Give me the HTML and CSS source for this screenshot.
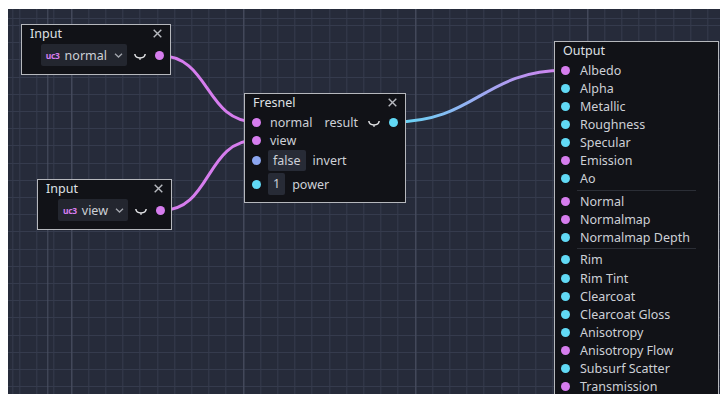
FILE: index.html
```html
<!DOCTYPE html>
<html lang="en">
    <head>
        <meta charset="utf-8">
        <title>Visual Shader</title>
        <link rel="stylesheet" href="styles.css">
    </head>
    <body>
        <div class="graph">
            <!-- connections between ports, in graph coordinates -->
            <svg class="wires" width="712" height="385">
                <defs>
                    <linearGradient id="scalar-to-vec" gradientUnits="userSpaceOnUse" x1="385" y1="0" x2="558" y2="0">
                        <stop offset="0" stop-color="#61d9f5"/>
                        <stop offset="1" stop-color="#d67dee"/>
                    </linearGradient>
                </defs>
                <path class="wire-vec" d="M151 46.5 C203 46.5 196 113 248.5 113"/>
                <path class="wire-vec" d="M152.7 201.7 C204 201.7 197 131 248.5 131"/>
                <path d="M385.3 113 C468 113 475 61.3 557.7 61.3" stroke="url(#scalar-to-vec)"/>
            </svg>

            <div class="node input-normal">
                <div class="node-title">
                    <span>Input</span>
                    <svg class="close" width="9" height="9"><path d="M0.7 0.7 L8.3 8.3 M8.3 0.7 L0.7 8.3"/></svg>
                </div>
                <div class="out-row">
                    <div class="dropdown">
                        <span class="type-icon">uc3</span>
                        <span class="dropdown-text">normal</span>
                        <svg class="chevron" width="9" height="5"><path d="M1 0.8 L4.5 4 L8 0.8"/></svg>
                    </div>
                    <svg class="eye" width="12" height="7"><path d="M0.8 1 C1.5 6.2 10.5 6.2 11.2 1 M6 5 V6.8"/></svg>
                    <span class="port vec"></span>
                </div>
            </div>

            <div class="node input-view">
                <div class="node-title">
                    <span>Input</span>
                    <svg class="close" width="9" height="9"><path d="M0.7 0.7 L8.3 8.3 M8.3 0.7 L0.7 8.3"/></svg>
                </div>
                <div class="out-row">
                    <div class="dropdown">
                        <span class="type-icon">uc3</span>
                        <span class="dropdown-text">view</span>
                        <svg class="chevron" width="9" height="5"><path d="M1 0.8 L4.5 4 L8 0.8"/></svg>
                    </div>
                    <svg class="eye" width="12" height="7"><path d="M0.8 1 C1.5 6.2 10.5 6.2 11.2 1 M6 5 V6.8"/></svg>
                    <span class="port vec"></span>
                </div>
            </div>

            <div class="node fresnel">
                <div class="node-title">
                    <span>Fresnel</span>
                    <svg class="close" width="9" height="9"><path d="M0.7 0.7 L8.3 8.3 M8.3 0.7 L0.7 8.3"/></svg>
                </div>
                <div class="row">
                    <span class="port vec"></span>
                    <span class="label">normal</span>
                    <span class="label result">result</span>
                    <svg class="eye" width="12" height="7"><path d="M0.8 1 C1.5 6.2 10.5 6.2 11.2 1 M6 5 V6.8"/></svg>
                    <span class="port scalar out-port"></span>
                </div>
                <div class="row">
                    <span class="port vec"></span>
                    <span class="label">view</span>
                </div>
                <div class="row row-field">
                    <span class="port bool"></span>
                    <span class="field">false</span>
                    <span class="field-label">invert</span>
                </div>
                <div class="row row-field row-spin">
                    <span class="port scalar"></span>
                    <span class="field">1</span>
                    <span class="field-label">power</span>
                </div>
            </div>

            <div class="node output">
                <div class="node-title">
                    <span>Output</span>
                </div>
                <div class="row"><span class="port vec"></span><span class="label">Albedo</span></div>
                <div class="row"><span class="port scalar"></span><span class="label">Alpha</span></div>
                <div class="row"><span class="port scalar"></span><span class="label">Metallic</span></div>
                <div class="row"><span class="port scalar"></span><span class="label">Roughness</span></div>
                <div class="row"><span class="port scalar"></span><span class="label">Specular</span></div>
                <div class="row"><span class="port vec"></span><span class="label">Emission</span></div>
                <div class="row"><span class="port scalar"></span><span class="label">Ao</span></div>
                <div class="sep"></div>
                <div class="row"><span class="port vec"></span><span class="label">Normal</span></div>
                <div class="row"><span class="port vec"></span><span class="label">Normalmap</span></div>
                <div class="row"><span class="port scalar"></span><span class="label">Normalmap Depth</span></div>
                <div class="sep"></div>
                <div class="row"><span class="port scalar"></span><span class="label">Rim</span></div>
                <div class="row"><span class="port scalar"></span><span class="label">Rim Tint</span></div>
                <div class="row"><span class="port scalar"></span><span class="label">Clearcoat</span></div>
                <div class="row"><span class="port scalar"></span><span class="label">Clearcoat Gloss</span></div>
                <div class="row"><span class="port scalar"></span><span class="label">Anisotropy</span></div>
                <div class="row"><span class="port vec"></span><span class="label">Anisotropy Flow</span></div>
                <div class="row"><span class="port scalar"></span><span class="label">Subsurf Scatter</span></div>
                <div class="row"><span class="port vec"></span><span class="label">Transmission</span></div>
            </div>
        </div>
    </body>
</html>
```

FILE: styles.css
```css
body {
    margin: 9px 0 0 8px;
    background-color: #fff;
    font-family: "Noto Sans", "Open Sans", sans-serif;
    font-size: 12.5px;
    color: #cdd0d6;
    overflow: hidden;
}

/* graph canvas with minor / major grid */
.graph {
    position: relative;
    width: 712px;
    height: 385px;
    overflow: hidden;
    background-color: #262b3a;
    background-image:
        repeating-linear-gradient(to right, #4a5062 0 1px, transparent 1px 172px),
        repeating-linear-gradient(to right, #353b4d 0 1px, transparent 1px 17.2px),
        repeating-linear-gradient(to bottom, #353b4d 0 1px, transparent 1px 17.2px);
    background-position: 63.3px 0, 11.3px 0, 0 16px;
}

.wires {
    position: absolute;
    left: 0;
    top: 0;
}

.wires path {
    fill: none;
    stroke-width: 3;
    stroke-linecap: round;
}

.wires .wire-vec {
    stroke: #d67dee;
}

.node {
    position: absolute;
    box-sizing: border-box;
    background-color: #111217;
    border: 1px solid #b6b8bd;
}

.node-title {
    display: flex;
    justify-content: space-between;
    align-items: flex-start;
    height: 19px;
    line-height: 17px;
    padding: 0 8px 0 8px;
    color: #dfe0e4;
}

.close {
    margin-top: 4px;
}

.close path {
    stroke: #b8bac0;
    stroke-width: 1.4;
}

.input-normal {
    left: 13px;
    top: 15px;
    width: 150px;
    height: 51px;
}

.input-view {
    left: 29px;
    top: 170px;
    width: 135px;
    height: 51px;
}

.fresnel {
    left: 236px;
    top: 84px;
    width: 162px;
    height: 110px;
}

.output {
    left: 546px;
    top: 32px;
    width: 165px;
}

.output .node-title {
    height: 19.3px;
}

.out-row {
    display: flex;
    align-items: center;
    justify-content: flex-end;
    height: 22px;
    padding-right: 6px;
}

.dropdown {
    display: flex;
    align-items: center;
    height: 22px;
    padding: 0 4px 0 5px;
    background-color: #23262f;
    border-radius: 2px;
}

.type-icon {
    font-size: 8.5px;
    font-weight: bold;
    letter-spacing: -0.3px;
    color: #d67dee;
}

.dropdown-text {
    margin-left: 5px;
}

.chevron {
    margin-left: 7px;
}

.chevron path {
    fill: none;
    stroke: #a3a6ad;
    stroke-width: 1.3;
}

.eye {
    margin: 3px 9px 0 7px;
}

.eye path {
    fill: none;
    stroke: #e2e3e6;
    stroke-width: 1.5;
}

.port {
    flex: none;
    width: 9px;
    height: 9px;
    border-radius: 50%;
}

.port.vec {
    background-color: #d67dee;
}

.port.scalar {
    background-color: #61d9f5;
}

.port.bool {
    background-color: #8ca6f0;
}

.row {
    display: flex;
    align-items: center;
    height: 18px;
    padding: 0 7px 0 7px;
}

.output .row {
    height: 18.06px;
    padding-left: 6px;
}

.label {
    margin-left: 9px;
    white-space: nowrap;
}

.output .label {
    margin-left: 10px;
}

.label.result {
    margin-left: auto;
}

.fresnel .eye {
    margin: 3px 9px 0 10px;
}

.row-field {
    height: 23px;
}

.row-spin {
    height: 24px;
}

.field {
    margin-left: 7px;
    padding: 0 5px;
    line-height: 21px;
    background-color: #272b36;
    border-radius: 2px;
}

.row-spin .field {
    line-height: 22px;
}

.field-label {
    margin-left: 7px;
}

.sep {
    width: 119px;
    height: 1px;
    margin: 2px 0 1.6px 22px;
    background-color: #2b2e36;
}
```
